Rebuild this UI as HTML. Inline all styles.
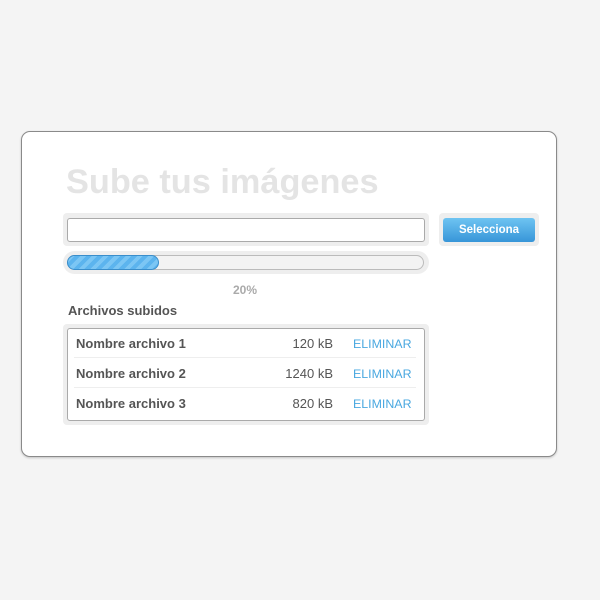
<!DOCTYPE html><html><head><style>
body{margin:0;background:#f4f4f4;font-family:"Liberation Sans",sans-serif;width:600px;height:600px;position:relative;overflow:hidden}
.a{position:absolute;box-sizing:border-box}
.card{left:21px;top:131px;width:536px;height:326px;background:#fff;border:1px solid #8a8a8a;border-radius:9px;box-shadow:0 1px 2px rgba(0,0,0,.2)}
.t{left:66px;top:163px;font-size:34.3px;font-weight:bold;color:#e4e4e4;white-space:nowrap}
.w{background:#eee;border-radius:4px}
.in{background:#fff;border:1px solid #aaa;border-radius:3px}
.btn{left:443px;top:218px;width:92px;height:24px;border-radius:3px;background:linear-gradient(#6ec4f2,#3795d8);color:#fff;font-weight:bold;font-size:11.5px;text-align:center;line-height:24px}
.fill{left:67px;top:255px;width:92px;height:15px;border-radius:8px;border:1px solid #3a8ecb;background:repeating-linear-gradient(-45deg,#5cb4ee 0 4px,#7cc6f4 4px 8px)}
.row{left:74px;width:342px;height:30px;font-size:13px;line-height:32px;color:#555}
.row b{position:absolute;left:2px}
.row .s{position:absolute;right:83px}
.row .e{position:absolute;left:279px;color:#4aa8e0;font-size:12.4px}
</style></head><body>
<div class="a card"></div>
<div class="a t">Sube tus imágenes</div>
<div class="a w" style="left:63px;top:213px;width:366px;height:33px"></div>
<div class="a in" style="left:67px;top:218px;width:358px;height:24px"></div>
<div class="a w" style="left:439px;top:213px;width:100px;height:33px"></div>
<div class="a btn">Selecciona</div>
<div class="a w" style="left:63px;top:251px;width:366px;height:23px;border-radius:12px"></div>
<div class="a" style="left:67px;top:255px;width:357px;height:15px;border-radius:8px;background:#f3f3f3;border:1px solid #bbb"></div>
<div class="a fill"></div>
<div class="a" style="left:233px;top:283px;font-size:12px;font-weight:bold;color:#aaa">20%</div>
<div class="a" style="left:68px;top:303px;font-size:13px;font-weight:bold;color:#555">Archivos subidos</div>
<div class="a w" style="left:63px;top:324px;width:366px;height:101px"></div>
<div class="a in" style="left:67px;top:328px;width:358px;height:93px"></div>
<div class="a row" style="top:328px;border-bottom:1px solid #eee"><b>Nombre archivo 1</b><span class="s">120 kB</span><span class="e">ELIMINAR</span></div>
<div class="a row" style="top:358px;border-bottom:1px solid #eee"><b>Nombre archivo 2</b><span class="s">1240 kB</span><span class="e">ELIMINAR</span></div>
<div class="a row" style="top:388px"><b>Nombre archivo 3</b><span class="s">820 kB</span><span class="e">ELIMINAR</span></div>
</body></html>
